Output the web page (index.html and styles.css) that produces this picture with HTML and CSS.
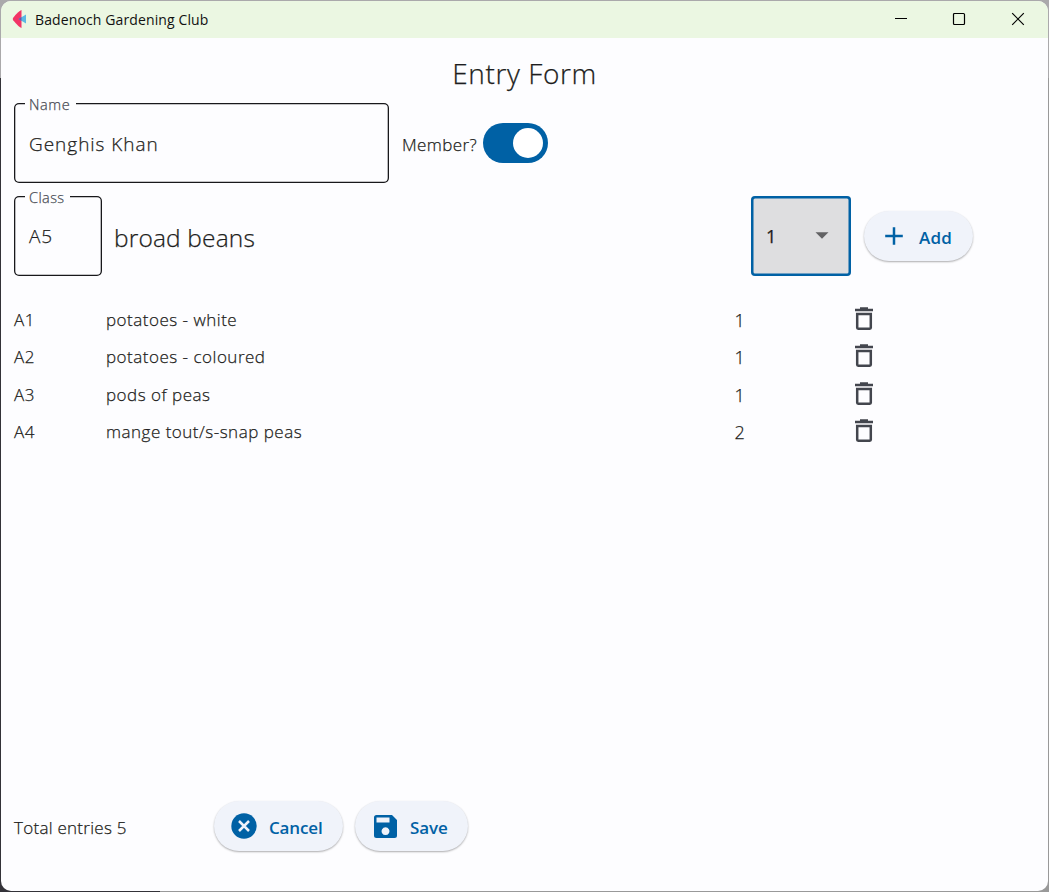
FILE: index.html
```
<!DOCTYPE html>
<html lang="en">
<head>
<meta charset="utf-8">
<title>Badenoch Gardening Club</title>
<link rel="stylesheet" href="styles.css">
</head>
<body>
<svg width="0" height="0" class="defs" aria-hidden="true">
  <symbol id="bin" viewBox="0 0 20 24"><path d="M1 3h18M6 1.500h8" fill="none" stroke="currentColor" stroke-width="2.300"/><path d="M3.200 7h13.600v13.800q0 .9-.9.9H4.100q-.9 0-.9-.9z" fill="none" stroke="currentColor" stroke-width="2.500"/></symbol>
</svg>
<div class="window">
  <header class="titlebar">
    <svg class="logo" width="16" height="20" viewBox="0 0 16 20"><path d="M9.500 1v18Q7 18.500 1.200 11.300q-1-1.300 0-2.600Q7 1.500 9.500 1z" fill="#f23466"/><path d="M6.500 10L14 5.500v9z" fill="#5bb8e4"/><path d="M6.500 10l3-2v4z" fill="#6b55a5"/></svg>
    <span class="apptitle">Badenoch Gardening Club</span>
    <div class="controls">
      <svg width="14" height="14" viewBox="0 0 14 14"><path d="M1 6.500h12"/></svg>
      <svg width="14" height="14" viewBox="0 0 14 14"><rect x="1.500" y="1.500" width="11" height="11" rx="1"/></svg>
      <svg width="14" height="14" viewBox="0 0 14 14"><path d="M1.200 1.200l11.600 11.600M12.800 1.200L1.200 12.800"/></svg>
    </div>
  </header>
  <main class="content">
    <h1>Entry Form</h1>
    <div class="row">
      <div class="field name"><span class="label">Name</span><span>Genghis Khan</span></div>
      <span class="member">Member?</span>
      <div class="switch"><div class="thumb"></div></div>
    </div>
    <div class="row second">
      <div class="field class"><span class="label">Class</span><span>A5</span></div>
      <span class="desc">broad beans</span>
      <div class="select"><span>1</span><svg width="14" height="7" viewBox="0 0 14 7"><path d="M.500 .300h13L7 6.700z" fill="#626264"/></svg></div>
      <div class="button add"><svg width="20" height="20" viewBox="0 0 20 20"><path d="M10 1.200v17.600M1.200 10h17.600" stroke="currentColor" stroke-width="2.500"/></svg><span>Add</span></div>
    </div>
    <div class="list">
      <div class="item"><span>A1</span><span>potatoes - white</span><span class="qty">1</span><svg width="20" height="24"><use href="#bin"/></svg></div>
      <div class="item"><span>A2</span><span>potatoes - coloured</span><span class="qty">1</span><svg width="20" height="24"><use href="#bin"/></svg></div>
      <div class="item"><span>A3</span><span>pods of peas</span><span class="qty">1</span><svg width="20" height="24"><use href="#bin"/></svg></div>
      <div class="item"><span>A4</span><span>mange tout/s-snap peas</span><span class="qty">2</span><svg width="20" height="24"><use href="#bin"/></svg></div>
    </div>
    <footer class="footer">
      <span class="total">Total entries 5</span>
      <div class="button cancel"><svg width="26" height="26" viewBox="0 0 26 26"><circle cx="13" cy="13" r="12.700" fill="currentColor"/><path d="M8 8l10 10M18 8L8 18" stroke="#f0f3fa" stroke-width="2.500"/></svg><span>Cancel</span></div>
      <div class="button save"><svg width="23" height="23" viewBox="0 0 23 23"><path fill="currentColor" fill-rule="evenodd" d="M2.500 0H18l5 5v15.500q0 2.500-2.500 2.500h-18Q0 23 0 20.500v-18Q0 0 2.500 0zM2.500 2.500v5h13v-5zM11.500 12.300a3.900 3.900 0 1 0 .01 0z"/></svg><span>Save</span></div>
    </footer>
  </main>
</div>
</body>
</html>
```
FILE: styles.css
```
* { box-sizing: border-box; }
body {
  margin: 0;
  width: 1049px;
  height: 892px;
  padding: 1px;
  overflow: hidden;
  background: linear-gradient(90deg, #333238 0 160px, #999 160px) bottom / 100% 814px no-repeat, #aaa9ab;
  font-family: "Open Sans", "Noto Sans", sans-serif;
  font-size: 17px;
  font-weight: 300;
  -webkit-text-stroke: 0.25px currentColor;
  color: #1d1d20;
}
.defs { position: absolute; }
.window {
  width: 1047px;
  height: 890px;
  border-radius: 10px;
  overflow: hidden;
  background: #fdfdff;
  display: flex;
  flex-direction: column;
}
.titlebar {
  height: 37px;
  flex: none;
  background: #ebf7e2;
  display: flex;
  align-items: center;
  padding: 0 23px 1px 11px;
}
.logo { margin-right: 7px; }
.apptitle { font-size: 14px; font-weight: 400; -webkit-text-stroke: 0; line-height: 20px; padding-top: 2px; color: #111; letter-spacing: 0.12px; white-space: nowrap; }
.controls { margin-left: auto; display: flex; gap: 44px; }
.controls svg { fill: none; stroke: #000; stroke-width: 1.200; display: block; }
.controls svg:nth-child(2) { margin-right: 1px; }
.content { flex: 1; padding: 0 13px; display: flex; flex-direction: column; white-space: nowrap; }
h1 { margin: 0; height: 65px; font-size: 28px; font-weight: 300; line-height: 71px; text-align: center; letter-spacing: 0.6px; }
.row { display: flex; align-items: center; height: 80px; }
.second { margin-top: 13px; }
.field { position: relative; border-radius: 5px; box-shadow: inset 0 0 0 1.300px #18181b; height: 80px; line-height: 82px; padding-left: 15px; font-size: 19px; letter-spacing: 0.97px; }
.field.name { width: 375px; }
.field.class { width: 88px; line-height: 80px; letter-spacing: 0.8px; }
.label { position: absolute; left: 11px; top: -8px; padding: 0 6px 0 4px; line-height: 20px; font-size: 14.500px; letter-spacing: 0.6px; background: #fdfdff; color: #494b54; }
.field.class .label { letter-spacing: 0.4px; }
.member { margin-left: 13px; width: 81px; padding-top: 2px; letter-spacing: 0.38px; }
.switch { width: 65px; height: 40px; border-radius: 20px; background: #0061a5; padding: 5px; display: flex; justify-content: flex-end; }
.thumb { width: 30px; height: 30px; border-radius: 50%; background: #fff; }
.desc { margin-left: 12px; flex: 1; font-size: 24.500px; line-height: 40px; padding-top: 3px; letter-spacing: 0.16px; }
.select { width: 100px; height: 80px; flex: none; box-shadow: inset 0 0 0 2.500px #0061a5; border-radius: 4px; background: #dedee0; display: flex; align-items: center; justify-content: space-between; padding: 0 22px 0 15px; font-size: 18px; font-weight: 400; }
.select svg { margin-bottom: 1px; }
.button { height: 50px; flex: none; border-radius: 25px; background: #f0f3fa; color: #0061a5; font-size: 17px; font-weight: 600; -webkit-text-stroke: 0; display: flex; align-items: center; box-shadow: 0 1px 2px rgba(0,0,0,.32); }
.button span { padding-top: 3px; }
.add { width: 109px; margin: 0 62px 0 13px; padding-left: 20px; gap: 15px; letter-spacing: 0.2px; }
.list { margin-top: 24px; }
.item { height: 37.500px; display: grid; grid-template-columns: 92px 628.500px 119px 20px; align-items: center; letter-spacing: 0.5px; }
.item svg { color: #43464e; display: block; }
.item span { padding-top: 1px; }
.item .qty { font-size: 18px; padding-top: 2px; }
.footer { margin-top: auto; margin-bottom: 40px; display: flex; align-items: center; }
.total { width: 200px; padding-top: 2px; letter-spacing: 0.27px; }
.cancel { width: 129px; padding-left: 17px; gap: 12px; letter-spacing: -0.15px; }
.save { width: 113px; margin-left: 12px; padding-left: 19px; gap: 13px; letter-spacing: -0.1px; }
```
